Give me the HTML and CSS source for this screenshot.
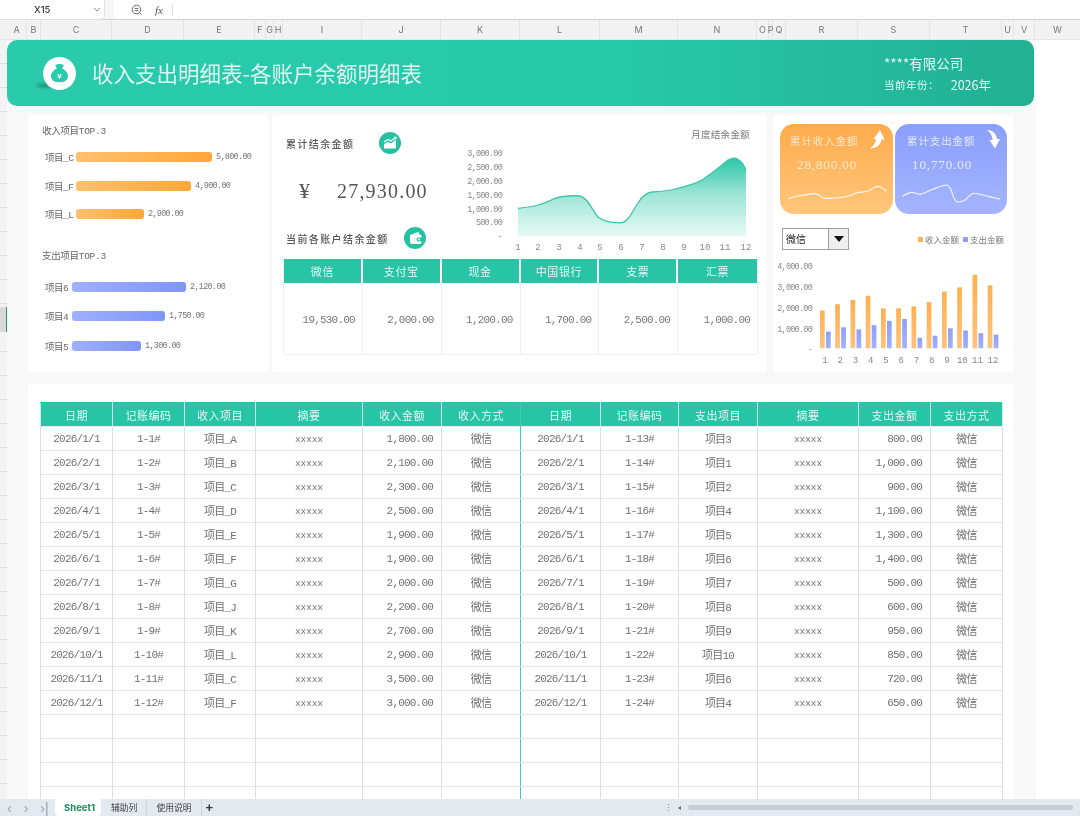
FILE: index.html
```html
<!DOCTYPE html>
<html lang="zh-CN">
<head>
<meta charset="utf-8">
<title>收入支出明细表</title>
<link rel="stylesheet" href="styles.css">
</head>
<body>
<div class="app">
  <header class="formula">
    <div class="namebox"><span class="cellref">X15</span>
      <svg class="chev" width="8" height="5" viewBox="0 0 8 5"><path d="M1 1l3 3 3-3" fill="none" stroke="#888" stroke-width="1"/></svg>
    </div>
    <div class="fxbox">
      <svg class="zoomicon" width="12" height="12" viewBox="0 0 12 12"><circle cx="5.5" cy="5.5" r="4.3" fill="none" stroke="#666"/><path d="M3.6 4.6h3.8M3.6 6.6h3.8M8.5 8.6l2.2 2.2" stroke="#666" fill="none"/></svg>
      <span class="fx">fx</span><span class="fxsep"></span>
    </div>
  </header>
  <div class="cols">
    <span class="c c20">A</span><span class="c c14">B</span><span class="c c71">C</span><span class="c c72">D</span><span class="c c71">E</span><span class="c c11">F</span><span class="c c8">G</span><span class="c c9">H</span><span class="c c79">I</span><span class="c c79">J</span><span class="c c79">K</span><span class="c c80">L</span><span class="c c78">M</span><span class="c c79">N</span><span class="c c12">O</span><span class="c c4">P</span><span class="c c13">Q</span><span class="c c72">R</span><span class="c c72">S</span><span class="c c72">T</span><span class="c c12">U</span><span class="c c21">V</span><span class="c c45">W</span>
  </div>
  <div class="sheet">
    <div class="gutter"><div class="selrow"></div></div>
    <main class="panel">
      <section class="banner">
        <div class="brand">
          <span class="logo-shadow"></span>
          <svg class="logo" width="33" height="33" viewBox="0 0 33 33">
            <circle cx="16.5" cy="16.5" r="16.5" fill="#fff"/>
            <path d="M12 7.500c1.200.8 2.200-.4 4.500-.4s3.300 1.200 4.500.4l-1.800 4.100c3.200 1.500 5.800 4.400 5.800 7.800 0 3.800-3.700 5.800-8.500 5.800s-8.500-2-8.500-5.800c0-3.400 2.600-6.300 5.800-7.800z" fill="#2acbad"/>
            <text x="16.500" y="21.500" class="logo-yen">¥</text>
          </svg>
          <h1 class="title">收入支出明细表-各账户余额明细表</h1>
        </div>
        <div class="company">
          <div class="co-name">****有限公司</div>
          <div class="co-year"><span class="co-label">当前年份：</span><span class="co-val">2026年</span></div>
        </div>
      </section>

      <div class="dash">
        <section class="card rank">
          <h3 class="rank-title">收入项目TOP.3</h3>
          <div class="rank-rows">
            <div class="rank-row"><span class="rank-name">项目_C</span><span class="bar bar-in" style="width:136px"></span><span class="rank-val">5,800.00</span></div>
            <div class="rank-row"><span class="rank-name">项目_F</span><span class="bar bar-in" style="width:115px"></span><span class="rank-val">4,900.00</span></div>
            <div class="rank-row"><span class="rank-name">项目_L</span><span class="bar bar-in" style="width:68px"></span><span class="rank-val">2,900.00</span></div>
          </div>
          <h3 class="rank-title rank-title-2">支出项目TOP.3</h3>
          <div class="rank-rows rank-rows-out">
            <div class="rank-row"><span class="rank-name">项目6</span><span class="bar bar-out" style="width:114px"></span><span class="rank-val">2,120.00</span></div>
            <div class="rank-row"><span class="rank-name">项目4</span><span class="bar bar-out" style="width:93px"></span><span class="rank-val">1,750.00</span></div>
            <div class="rank-row"><span class="rank-name">项目5</span><span class="bar bar-out" style="width:69px"></span><span class="rank-val">1,300.00</span></div>
          </div>
        </section>

        <section class="card mid">
          <div class="mid-top">
            <div class="mid-left">
              <div class="mid-head">
                <h2 class="mid-title">累计结余金额</h2>
                <svg class="ic ic-a" width="22" height="22" viewBox="0 0 22 22"><circle cx="11" cy="11" r="11" fill="#26c0a3"/><path d="M5 16.500v-4.500l4-2 3 1.500 5-4v9z" fill="#fff"/><path d="M5 10l4-2.500 3 1.500 4.500-3.500" fill="none" stroke="#fff" stroke-width="1.200"/><path d="M14.500 4.800h3v3z" fill="#fff"/></svg>
              </div>
              <div class="total"><span class="yen">¥</span><span class="total-val">27,930.00</span></div>
              <div class="mid-head mid-head-2">
                <h2 class="mid-title">当前各账户结余金额</h2>
                <svg class="ic ic-b" width="22" height="22" viewBox="0 0 22 22"><circle cx="11" cy="11" r="11" fill="#26c0a3"/><path d="M7 7.500l7.500-2.500 1 2.500z" fill="#fff"/><path fill-rule="evenodd" d="M6.500 7.500h9.500a1.500 1.500 0 0 1 1.500 1.500v1.500h-3a2 2 0 0 0 0 4h3v1a1.500 1.500 0 0 1-1.500 1.500h-8a2 2 0 0 1-2-2v-6a1.500 1.500 0 0 1 .5-1z" fill="#fff"/><circle cx="15" cy="12.500" r="1" fill="#fff"/></svg>
              </div>
            </div>
            <svg class="area" width="317" height="134" viewBox="440 125 317 134">
              <defs>
                <linearGradient id="areaG" x1="0" y1="0" x2="0" y2="1"><stop offset="0" stop-color="#2cc6a9"/><stop offset=".45" stop-color="#9ce4d4"/><stop offset="1" stop-color="#e6f9f4"/></linearGradient>
              </defs>
              <text x="750" y="138" class="t-r t-title">月度结余金额</text>
              <g class="t-axis">
                <text x="502" y="156" class="t-r">3,000.00</text>
                <text x="502" y="170" class="t-r">2,500.00</text>
                <text x="502" y="184" class="t-r">2,000.00</text>
                <text x="502" y="198" class="t-r">1,500.00</text>
                <text x="502" y="211.500" class="t-r">1,000.00</text>
                <text x="502" y="225" class="t-r">500.00</text>
                <text x="502" y="239" class="t-r">-</text>
              </g>
              <path d="M518 208.300C526 207.500 533 206.500 540 204.500C547 202.500 554 198 560 197C568 195.800 575 195.500 580 196C588 198 592 210 598 217C604 222 612 222.800 620 222.800C628 222.800 632 212 638 203C642 196 646 193 652 192C660 191.500 668 191 675 189C685 186.500 700 183 705 178C715 171 722 165 728 160C732 158 736 158 738 159.500C741 161 744 164 746 170.500V236H518Z" fill="url(#areaG)"/>
              <path d="M518 208.300C526 207.500 533 206.500 540 204.500C547 202.500 554 198 560 197C568 195.800 575 195.500 580 196C588 198 592 210 598 217C604 222 612 222.800 620 222.800C628 222.800 632 212 638 203C642 196 646 193 652 192C660 191.500 668 191 675 189C685 186.500 700 183 705 178C715 171 722 165 728 160C732 158 736 158 738 159.500C741 161 744 164 746 170.500" fill="none" stroke="#3dc5ab" stroke-width="1.300"/>
              <g class="t-axis">
                <text x="518" y="250" class="t-m">1</text><text x="538" y="250" class="t-m">2</text><text x="559" y="250" class="t-m">3</text><text x="580" y="250" class="t-m">4</text><text x="600" y="250" class="t-m">5</text><text x="621" y="250" class="t-m">6</text><text x="642" y="250" class="t-m">7</text><text x="663" y="250" class="t-m">8</text><text x="684" y="250" class="t-m">9</text><text x="705" y="250" class="t-m">10</text><text x="725" y="250" class="t-m">11</text><text x="746" y="250" class="t-m">12</text>
              </g>
            </svg>
          </div>
          <div class="acct">
            <div class="acct-col"><div class="acct-h">微信</div><div class="acct-v">19,530.00</div></div>
            <div class="acct-col"><div class="acct-h">支付宝</div><div class="acct-v">2,000.00</div></div>
            <div class="acct-col"><div class="acct-h">现金</div><div class="acct-v">1,200.00</div></div>
            <div class="acct-col"><div class="acct-h">中国银行</div><div class="acct-v">1,700.00</div></div>
            <div class="acct-col"><div class="acct-h">支票</div><div class="acct-v">2,500.00</div></div>
            <div class="acct-col"><div class="acct-h">汇票</div><div class="acct-v">1,000.00</div></div>
          </div>
        </section>

        <section class="card side">
          <div class="tiles">
            <div class="tile tile-in">
              <div class="tile-title">累计收入金额</div>
              <div class="tile-val">28,800.00</div>
              <svg class="tile-arrow" width="15" height="19" viewBox="0 0 15 19"><path d="M10 0L14.500 9.500H11.500C11.500 14 6.500 18.500 0 18.500C4 15.500 6 12.500 6 9H3.500Z" fill="#fff"/></svg>
              <svg class="spark" width="112" height="36" viewBox="0 0 112 36"><path d="M8.300 25C12 23.500 15 22.500 18 22C24 21 30 19.800 35 19.300C39 20 41 24 45 24.300C49 24.600 53 24.300 56.700 24C61 23.700 65 23.200 68 22.300C72 21 75 19.300 78 18.700C82 18 85 17.800 88 17C91 16 94 12.800 97 12.300C99 12.100 100 12.900 101.700 13.700C103.500 14.700 105 16 106.700 17" class="spark-line"/></svg>
            </div>
            <div class="tile tile-out">
              <div class="tile-title">累计支出金额</div>
              <div class="tile-val">10,770.00</div>
              <svg class="tile-arrow" width="14" height="19" viewBox="0 0 14 19"><path d="M0 0C6 0 9.500 4 10 9H13L8 18.500L2.500 10H5.500C5.500 6 3.500 2.500 0 0Z" fill="#fff"/></svg>
              <svg class="spark" width="112" height="36" viewBox="0 0 112 36"><path d="M7.700 22.300C10.500 20.500 13.500 18.500 16.700 18.300C19.500 18.200 22 20.500 25 20.300C29 20 34 16.500 38.300 15C42.500 13.500 48 11 51.700 11C54.500 11.500 55 14 56.700 17.700C58 21 59 26.500 61.700 27.700C64.500 28.500 67.500 27.500 70 26C73 24.200 75 20 78.300 19.300C82 18.800 87 21 91.700 22C96 23 101 24.200 105 25" class="spark-line"/></svg>
            </div>
          </div>
          <div class="side-ctrl">
            <div class="drop"><span class="drop-val">微信</span><span class="drop-btn"><i class="drop-tri"></i></span></div>
            <div class="legend"><i class="sq sq-in"></i><span>收入金额</span><i class="sq sq-out"></i><span>支出金额</span></div>
          </div>
          <svg class="bars" width="241" height="110" viewBox="773 258 241 110">
            <defs>
              <linearGradient id="bO" x1="0" y1="0" x2="0" y2="1"><stop offset="0" stop-color="#ffb050"/><stop offset="1" stop-color="#ffc27a"/></linearGradient>
              <linearGradient id="bB" x1="0" y1="0" x2="0" y2="1"><stop offset="0" stop-color="#8d9ffb"/><stop offset="1" stop-color="#a3b2fc"/></linearGradient>
            </defs>
            <g class="t-axis">
              <text x="812" y="268.500" class="t-r">4,000.00</text><text x="812" y="289.500" class="t-r">3,000.00</text><text x="812" y="310.500" class="t-r">2,000.00</text><text x="812" y="331.500" class="t-r">1,000.00</text><text x="812" y="352" class="t-r">-</text>
            </g>
            <g fill="url(#bO)">
              <rect x="820" y="310.500" width="4.700" height="37.800"/><rect x="835.200" y="304.200" width="4.700" height="44.100"/><rect x="850.500" y="300" width="4.700" height="48.300"/><rect x="865.700" y="295.800" width="4.700" height="52.500"/><rect x="881" y="308.400" width="4.700" height="39.900"/><rect x="896.200" y="308.400" width="4.700" height="39.900"/><rect x="911.500" y="306.300" width="4.700" height="42"/><rect x="926.700" y="302.100" width="4.700" height="46.200"/><rect x="942" y="291.600" width="4.700" height="56.700"/><rect x="957.200" y="287.400" width="4.700" height="60.900"/><rect x="972.500" y="274.800" width="4.700" height="73.500"/><rect x="987.700" y="285.300" width="4.700" height="63"/>
            </g>
            <g fill="url(#bB)">
              <rect x="826" y="331.500" width="4.700" height="16.800"/><rect x="841.200" y="327.300" width="4.700" height="21"/><rect x="856.500" y="329.400" width="4.700" height="18.900"/><rect x="871.700" y="325.200" width="4.700" height="23.100"/><rect x="887" y="321" width="4.700" height="27.300"/><rect x="902.200" y="318.900" width="4.700" height="29.400"/><rect x="917.500" y="337.800" width="4.700" height="10.500"/><rect x="932.700" y="335.700" width="4.700" height="12.600"/><rect x="948" y="328.300" width="4.700" height="20"/><rect x="963.200" y="330.500" width="4.700" height="17.800"/><rect x="978.500" y="333.200" width="4.700" height="15.100"/><rect x="993.700" y="334.700" width="4.700" height="13.600"/>
            </g>
            <g class="t-axis">
              <text x="825" y="363" class="t-m">1</text><text x="840.300" y="363" class="t-m">2</text><text x="855.500" y="363" class="t-m">3</text><text x="870.800" y="363" class="t-m">4</text><text x="886" y="363" class="t-m">5</text><text x="901.300" y="363" class="t-m">6</text><text x="916.500" y="363" class="t-m">7</text><text x="931.800" y="363" class="t-m">8</text><text x="947" y="363" class="t-m">9</text><text x="962.300" y="363" class="t-m">10</text><text x="977.500" y="363" class="t-m">11</text><text x="993" y="363" class="t-m">12</text>
            </g>
          </svg>
        </section>
      </div>

      <section class="card ledger">
        <table class="tbl">
          <colgroup><col class="w72"><col class="w72"><col class="w71"><col class="w107"><col class="w79"><col class="w79"><col class="w80"><col class="w78"><col class="w79"><col class="w101"><col class="w72"><col class="w72"></colgroup>
          <thead><tr><th>日期</th><th>记账编码</th><th>收入项目</th><th>摘要</th><th>收入金额</th><th class="split">收入方式</th><th>日期</th><th>记账编码</th><th>支出项目</th><th>摘要</th><th>支出金额</th><th>支出方式</th></tr></thead>
          <tbody>
            <tr><td>2026/1/1</td><td>1-1#</td><td>项目_A</td><td class="xs">xxxxx</td><td class="amt">1,800.00</td><td class="split">微信</td><td>2026/1/1</td><td>1-13#</td><td>项目3</td><td class="xs">xxxxx</td><td class="amt">800.00</td><td>微信</td></tr>
            <tr><td>2026/2/1</td><td>1-2#</td><td>项目_B</td><td class="xs">xxxxx</td><td class="amt">2,100.00</td><td class="split">微信</td><td>2026/2/1</td><td>1-14#</td><td>项目1</td><td class="xs">xxxxx</td><td class="amt">1,000.00</td><td>微信</td></tr>
            <tr><td>2026/3/1</td><td>1-3#</td><td>项目_C</td><td class="xs">xxxxx</td><td class="amt">2,300.00</td><td class="split">微信</td><td>2026/3/1</td><td>1-15#</td><td>项目2</td><td class="xs">xxxxx</td><td class="amt">900.00</td><td>微信</td></tr>
            <tr><td>2026/4/1</td><td>1-4#</td><td>项目_D</td><td class="xs">xxxxx</td><td class="amt">2,500.00</td><td class="split">微信</td><td>2026/4/1</td><td>1-16#</td><td>项目4</td><td class="xs">xxxxx</td><td class="amt">1,100.00</td><td>微信</td></tr>
            <tr><td>2026/5/1</td><td>1-5#</td><td>项目_E</td><td class="xs">xxxxx</td><td class="amt">1,900.00</td><td class="split">微信</td><td>2026/5/1</td><td>1-17#</td><td>项目5</td><td class="xs">xxxxx</td><td class="amt">1,300.00</td><td>微信</td></tr>
            <tr><td>2026/6/1</td><td>1-6#</td><td>项目_F</td><td class="xs">xxxxx</td><td class="amt">1,900.00</td><td class="split">微信</td><td>2026/6/1</td><td>1-18#</td><td>项目6</td><td class="xs">xxxxx</td><td class="amt">1,400.00</td><td>微信</td></tr>
            <tr><td>2026/7/1</td><td>1-7#</td><td>项目_G</td><td class="xs">xxxxx</td><td class="amt">2,000.00</td><td class="split">微信</td><td>2026/7/1</td><td>1-19#</td><td>项目7</td><td class="xs">xxxxx</td><td class="amt">500.00</td><td>微信</td></tr>
            <tr><td>2026/8/1</td><td>1-8#</td><td>项目_J</td><td class="xs">xxxxx</td><td class="amt">2,200.00</td><td class="split">微信</td><td>2026/8/1</td><td>1-20#</td><td>项目8</td><td class="xs">xxxxx</td><td class="amt">600.00</td><td>微信</td></tr>
            <tr><td>2026/9/1</td><td>1-9#</td><td>项目_K</td><td class="xs">xxxxx</td><td class="amt">2,700.00</td><td class="split">微信</td><td>2026/9/1</td><td>1-21#</td><td>项目9</td><td class="xs">xxxxx</td><td class="amt">950.00</td><td>微信</td></tr>
            <tr><td>2026/10/1</td><td>1-10#</td><td>项目_L</td><td class="xs">xxxxx</td><td class="amt">2,900.00</td><td class="split">微信</td><td>2026/10/1</td><td>1-22#</td><td>项目10</td><td class="xs">xxxxx</td><td class="amt">850.00</td><td>微信</td></tr>
            <tr><td>2026/11/1</td><td>1-11#</td><td>项目_C</td><td class="xs">xxxxx</td><td class="amt">3,500.00</td><td class="split">微信</td><td>2026/11/1</td><td>1-23#</td><td>项目6</td><td class="xs">xxxxx</td><td class="amt">720.00</td><td>微信</td></tr>
            <tr><td>2026/12/1</td><td>1-12#</td><td>项目_F</td><td class="xs">xxxxx</td><td class="amt">3,000.00</td><td class="split">微信</td><td>2026/12/1</td><td>1-24#</td><td>项目4</td><td class="xs">xxxxx</td><td class="amt">650.00</td><td>微信</td></tr>
            <tr><td></td><td></td><td></td><td></td><td></td><td class="split"></td><td></td><td></td><td></td><td></td><td></td><td></td></tr>
            <tr><td></td><td></td><td></td><td></td><td></td><td class="split"></td><td></td><td></td><td></td><td></td><td></td><td></td></tr>
            <tr><td></td><td></td><td></td><td></td><td></td><td class="split"></td><td></td><td></td><td></td><td></td><td></td><td></td></tr>
            <tr><td></td><td></td><td></td><td></td><td></td><td class="split"></td><td></td><td></td><td></td><td></td><td></td><td></td></tr>
          </tbody>
        </table>
      </section>
    </main>
    <div class="outside"></div>
  </div>
  <footer class="tabbar">
    <div class="nav"><span>‹</span><span>›</span><span>›|</span></div>
    <div class="tab tab-on">Sheet1</div>
    <div class="tab">辅助列</div>
    <div class="tab">使用说明</div>
    <div class="plus">+</div>
    <div class="hscroll">
      <span class="grip">⋮</span><span class="hleft"></span><div class="thumb"></div>
    </div>
  </footer>
</div>
</body>
</html>
```

FILE: styles.css
```css
* { box-sizing: border-box; }
html, body { margin: 0; padding: 0; }
body {
  width: 1080px; height: 816px; overflow: hidden; background: #fff; color: #666;
  font-family: "Liberation Mono", "Noto Sans CJK SC", monospace;
}
h1, h2, h3 { margin: 0; font-weight: 400; }
.app { width: 1080px; height: 816px; display: flex; flex-direction: column; overflow: hidden; filter: blur(.3px); }

/* formula bar */
.formula { height: 20px; display: flex; background: #f6f6f6; border-bottom: 1px solid #d2d2d2; flex: none; }
.namebox { width: 105px; background: #fff; border-radius: 0 0 5px 0; border-right: 1px solid #e2e2e2; display: flex; align-items: center; justify-content: space-between; padding: 0 2px 0 34px; margin-bottom: -1px; border-bottom: 1px solid #ddd; }
.cellref { font: 500 9.500px "Inter", sans-serif; color: #333; }
.chev { margin-right: 1px; }
.fxbox { flex: 1; margin-left: 9px; background: #fff; border-radius: 0 0 0 5px; display: flex; align-items: center; padding-left: 17px; }
.fx { font: italic 11px "Liberation Serif", serif; color: #555; margin-left: 12px; width: 16px; }
.fxsep { width: 1px; height: 12px; background: #ddd; margin-left: 1px; }

/* column letters */
.cols { height: 20px; flex: none; display: flex; padding-left: 7px; background: #f2f2f2; border-bottom: 1px solid #e6e6e6; overflow: hidden; }
.c { display: flex; align-items: center; justify-content: center; font: 9px "Inter", sans-serif; color: #777; border-right: 1px solid #e4e4e4; flex: none; }
.c20 { width: 20px; } .c14 { width: 14px; } .c71 { width: 71px; } .c72 { width: 72px; } .c11 { width: 11px; } .c8 { width: 8px; } .c9 { width: 9px; } .c79 { width: 79px; } .c80 { width: 80px; } .c78 { width: 78px; } .c12 { width: 12px; } .c4 { width: 4px; } .c13 { width: 13px; } .c21 { width: 21px; } .c45 { width: 45px; border-right: 0; }

/* sheet */
.sheet { flex: 1; min-height: 0; display: flex; overflow: hidden; }
.gutter { width: 7px; flex: none; padding-top: 267px; background: repeating-linear-gradient(#f3f3f3 0, #f3f3f3 23px, #dfdfdf 23px, #dfdfdf 24px); }
.selrow { height: 25px; background: #d9d9d9; border-right: 1px solid #1f9d6b; }
.panel { width: 1029px; flex: none; background: #f8f8f8; display: flex; flex-direction: column; }
.outside { flex: 1; background: #fff; }

/* banner */
.banner { height: 66px; flex: none; margin-right: 2px; border-radius: 10px; background: linear-gradient(90deg, #2acbad 0%, #28c8aa 60%, #21b094 100%); display: flex; align-items: center; justify-content: space-between; color: #e6f9f5; padding: 0 43px 0 36px; box-shadow: 0 1px 1px rgba(0,0,0,.04); }
.brand { display: flex; align-items: center; gap: 16px; position: relative; }
.logo { position: relative; flex: none; }
.logo-shadow { position: absolute; left: -6px; top: 26px; width: 18px; height: 5px; border-radius: 50%; background: rgba(20,90,75,.45); filter: blur(1.5px); }
.logo-yen { font: 700 8px "Liberation Sans", sans-serif; fill: #fff; text-anchor: middle; }
.title { font-family: "Noto Sans CJK SC", sans-serif; font-size: 21.500px; font-weight: 400; line-height: 30px; color: #def6f1; }
.company { width: 107px; font-family: "Noto Sans CJK SC", sans-serif; }
.co-name { font-size: 13.500px; line-height: 20px; margin-bottom: 3px; }
.co-year { display: flex; justify-content: space-between; align-items: center; height: 18px; }
.co-label { font-size: 10.500px; letter-spacing: .5px; }
.co-val { font-size: 12.500px; margin-right: 0; }

/* dashboard row */
.dash { margin: 9px 22px 0 21px; display: grid; grid-template-columns: 241px 495px 241px; column-gap: 3px; height: 257px; flex: none; }
.dash .card + .card + .card { margin-left: 3px; margin-right: -3px; }
.card { background: #fff; border-radius: 3px; }

/* rank */
.rank { padding: 11px 0 0 14px; }
.rank-title { font-size: 9.500px; line-height: 12px; height: 12px; color: #666; letter-spacing: -.3px; }
.rank-title-2 { margin-top: 22px; }
.rank-rows { margin-top: 5px; }
.rank-rows-out { margin-top: 10px; }
.rank-row { height: 28.500px; display: flex; align-items: center; font-size: 9.500px; }
.rank-rows-out .rank-row { height: 29.300px; }
.rank-name { width: 34px; padding-left: 3px; flex: none; color: #666; font-size: 9.500px; letter-spacing: -.5px; }
.rank-rows-out .rank-name { width: 30px; }
.bar { height: 10px; border-radius: 3px; flex: none; }
.bar-in { background: linear-gradient(90deg, #ffc06f, #ffa739); }
.bar-out { background: linear-gradient(90deg, #9fb0fc, #8095f9); }
.rank-val { margin-left: 4px; color: #777; font-size: 8.500px; letter-spacing: -.7px; }

/* middle */
.mid { padding: 0 9px 0 11px; display: flex; flex-direction: column; }
.mid-top { display: flex; height: 144px; margin-right: 0; }
.mid-left { width: 157px; flex: none; padding: 17px 0 0 3px; display: flex; flex-direction: column; }
.mid-head { display: flex; align-items: center; height: 22px; }
.mid-title { font-family: "Noto Sans CJK SC", sans-serif; font-size: 10px; letter-spacing: 1.400px; color: #555; font-weight: 500; }
.ic { flex: none; }
.ic-a { margin-left: 25px; }
.ic-b { margin-left: 15px; }
.total { height: 74px; display: flex; align-items: center; padding: 0 0 0 13px; color: #555; }
.yen { font: 22px "Liberation Serif", serif; width: 38px; }
.total-val { font: 20px "Liberation Serif", serif; letter-spacing: 1.200px; }
.mid-head-2 { margin-top: -1px; }
.area { margin-top: 10px; flex: none; display: block; }
.t-axis text { font-size: 8.500px; letter-spacing: -.75px; fill: #888; font-family: "Liberation Mono", monospace; }
.t-axis .t-m { letter-spacing: 0; font-size: 9px; }
.t-r { text-anchor: end; }
.t-m { text-anchor: middle; }
.t-title { font-family: "Noto Sans CJK SC", sans-serif; font-size: 9.500px; fill: #777; letter-spacing: .3px; }

.acct { display: grid; grid-template-columns: repeat(6, 1fr); height: 96px; border: 1px solid #efefef; border-top: 0; border-radius: 0 0 3px 3px; }
.acct-col { display: flex; flex-direction: column; border-right: 1px solid #efefef; }
.acct-col:last-child { border-right: 0; }
.acct-h { height: 24px; background: #27c4a6; color: #e3f8f3; border-right: 1px solid #fff; display: flex; align-items: center; justify-content: center; font-family: "Noto Sans CJK SC", sans-serif; font-size: 11px; letter-spacing: .6px; }
.acct-col:last-child .acct-h { border-right: 0; }
.acct-v { flex: 1; display: flex; align-items: center; justify-content: flex-end; padding: 3px 7px 0 0; font-size: 11px; letter-spacing: -.8px; color: #777; }

/* side */
.side { padding: 9px 7px 0 7px; display: flex; flex-direction: column; }
.tiles { display: grid; grid-template-columns: 113px 112px; column-gap: 2px; height: 90px; }
.tile { position: relative; border-radius: 14px; color: #fff; overflow: hidden; padding: 10px 0 0 10px; }
.tile-in { background: linear-gradient(#ffab4b, #ffc77d); color: #ffe7c9; }
.tile-out { background: linear-gradient(#8b9ffc, #a4b4fe); color: #e4e9ff; padding-left: 12px; }
.tile-title { font-family: "Noto Sans CJK SC", sans-serif; font-size: 10.500px; line-height: 14px; letter-spacing: .9px; }
.tile-val { font: 13px "Liberation Serif", serif; letter-spacing: .9px; margin: 9px 0 0 7px; line-height: 15px; }
.tile-out .tile-val { margin-left: 5px; }
.tile-arrow { position: absolute; right: 8px; top: 6px; }
.tile-out .tile-arrow { right: 6px; }
.spark { position: absolute; left: 0; bottom: 4px; }
.spark-line { fill: none; stroke: #fff; stroke-width: 1.200px; opacity: .85; }
.side-ctrl { display: flex; align-items: center; justify-content: space-between; margin-top: 14px; height: 22px; padding-left: 2px; padding-right: 3px; }
.drop { width: 67px; height: 22px; border: 1.500px solid #a0a0a0; display: flex; background: #fff; }
.drop-val { flex: 1; font-family: "Noto Sans CJK SC", sans-serif; font-size: 10px; color: #222; padding-left: 3px; line-height: 19px; }
.drop-btn { width: 20px; background: #efefef; border-left: 1.500px solid #a0a0a0; display: flex; align-items: center; justify-content: center; }
.drop-tri { width: 0; height: 0; border-left: 5px solid transparent; border-right: 5px solid transparent; border-top: 6px solid #111; }
.legend { display: flex; align-items: center; font-family: "Noto Sans CJK SC", sans-serif; font-size: 8.500px; color: #777; }
.sq { width: 5px; height: 5px; display: inline-block; margin-right: 2px; }
.sq-in { background: #ffb25a; }
.sq-out { background: #8fa2fb; margin-left: 4px; }
.bars { display: block; margin: 8px 0 0 -7px; flex: none; }

/* ledger */
.ledger { margin: 12px 22px 0 21px; flex: 1; min-height: 0; padding: 18px 12px 0; overflow: hidden; border-radius: 3px 3px 0 0; }
.tbl { border-collapse: collapse; table-layout: fixed; width: 962px; font-size: 11px; letter-spacing: -.8px; color: #707070; }
.w72 { width: 72px; } .w71 { width: 71px; } .w107 { width: 107px; } .w79 { width: 79px; } .w80 { width: 80px; } .w78 { width: 78px; } .w101 { width: 101px; }
.tbl th { height: 24px; padding: 0; background: #27c4a6; color: #e6f9f5; font-family: "Noto Sans CJK SC", sans-serif; font-weight: 400; font-size: 11px; letter-spacing: .5px; border: 1px solid #c8f0e8; border-top-color: #27c4a6; border-bottom: 0; }
.tbl td { height: 24px; padding: 0; text-align: center; border: 1px solid #dedede; border-top-color: #ececec; border-bottom-color: #e4e4e4; background: #fff; }
.tbl td:nth-child(3), .tbl td:nth-child(6), .tbl td:nth-child(9), .tbl td:nth-child(12) { padding-bottom: 2px; }
.tbl th.split, .tbl td.split { border-right: 1px solid #45c9b0; }
.tbl td.amt { text-align: right; padding-right: 8px; }
.tbl td.xs { font-size: 9.500px; letter-spacing: -.1px; padding-top: 2px; }

/* tab bar */
.tabbar { height: 17px; flex: none; background: #e3e9ee; display: flex; align-items: stretch; font-family: "Noto Sans CJK SC", sans-serif; font-size: 8.800px; color: #444; position: relative; }
.nav { width: 55px; display: flex; align-items: center; gap: 12px; padding-left: 7px; color: #9aa2aa; font: 14px "Liberation Sans", sans-serif; }
.tab { display: flex; align-items: center; padding: 0 9px; border-right: 1px solid #cfd6dc; }
.tab-on { width: 46px; padding: 0 0 0 9px; background: #fff; color: #1f8a5c; font: 700 9.500px "Inter", sans-serif; border-radius: 0 0 4px 4px; border-right: 0; margin-right: 1px; }
.plus { font: 700 13px "Liberation Sans", sans-serif; color: #333; margin-left: 4px; display: flex; align-items: center; }
.hscroll { margin-left: auto; width: 416px; display: flex; align-items: center; padding-right: 7px; }
.grip { font: 9px "Liberation Sans", sans-serif; color: #888; width: 9px; }
.hleft { width: 0; height: 0; border-top: 2px solid transparent; border-bottom: 2px solid transparent; border-right: 3px solid #666; margin: 0 7px 0 5px; }
.thumb { flex: 1; height: 5px; background: #c5cdd5; border-radius: 3px; }
```
